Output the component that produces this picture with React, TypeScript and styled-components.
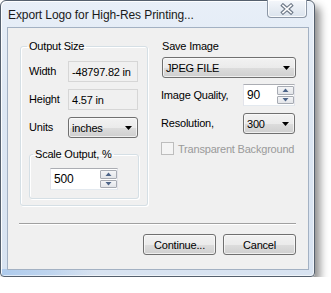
import React from "react";
import styled, { createGlobalStyle } from "styled-components";

const Global = createGlobalStyle`
  html, body { margin: 0; padding: 0; background: #ffffff; }
  body { font-family: "Liberation Sans", Arial, sans-serif; }
  * { box-sizing: border-box; }
`;

const Window = styled.div`
  width: 315px;
  height: 277px;
  border: 1px solid #55606e;
  border-radius: 6px 6px 4px 4px;
  background:
    linear-gradient(to right, rgba(160, 195, 235, 0.75) 0, rgba(160, 195, 235, 0.45) 16%, rgba(160, 195, 235, 0) 30%) left bottom / 100% 7px no-repeat,
    linear-gradient(180deg, #e8eff8 0%, #dde7f3 40%, #d8e3f1 100%);
  box-shadow: inset 1px 1px 0 rgba(255, 255, 255, 0.9), inset -1px -1px 0 rgba(255, 255, 255, 0.6),
    5px 6px 9px rgba(0, 0, 0, 0.45);
  display: flex;
  flex-direction: column;
  padding: 0 5px 6px 6px;
`;

const TitleBar = styled.div`
  height: 26px;
  display: flex;
  align-items: flex-start;
  justify-content: space-between;
`;

const Title = styled.div`
  font-family: "Liberation Sans", Arial, sans-serif;
  font-size: 12px;
  line-height: 15px;
  color: #1a1a1a;
  margin-top: 7px;
  padding-left: 1px;
  letter-spacing: -0.1px;
`;

const CloseButton = styled.div`
  width: 40px;
  height: 18px;
  margin-top: -1px;
  margin-right: 2px;
  border: 1px solid #8c97a6;
  border-top: none;
  border-radius: 0 0 4px 4px;
  background: linear-gradient(180deg, #f4f7fb 0%, #e6ecf3 55%, #dbe3ed 100%);
  box-shadow: inset 0 0 0 1px rgba(255, 255, 255, 0.8);
  display: flex;
  align-items: center;
  justify-content: center;
`;

const Client = styled.div`
  flex: 1;
  background: #f0f0f0;
  border: 1px solid #a3b1c3;
  padding: 12px 12px 0 12px;
  display: flex;
  flex-direction: column;
  font-size: 11px;
  letter-spacing: -0.2px;
  color: #000;
`;

const MainRow = styled.div`
  display: flex;
  align-items: flex-start;
  gap: 13px;
`;

const Group = styled.fieldset<{ $w: number; $pl: number; $pb: number }>`
  margin: 0;
  width: ${(p) => p.$w}px;
  min-width: 0;
  border: 1px solid #d5dfe5;
  border-radius: 3px;
  padding: 0 ${(p) => p.$pl}px ${(p) => p.$pb}px ${(p) => p.$pl}px;
  box-shadow: inset 1px 1px 0 #ffffff, 1px 1px 0 #ffffff;
`;

const Legend = styled.legend`
  padding: 0 2px;
  margin-left: -2px;
  font-size: 11px;
  line-height: 13px;
`;

const FormGrid = styled.div`
  margin-top: 8px;
  display: grid;
  grid-template-columns: 39px 70px;
  row-gap: 7px;
  align-items: center;
`;

const Label = styled.span`
  line-height: 13px;
  white-space: nowrap;
`;

const ReadOnlyBox = styled.div`
  height: 21px;
  border: 1px solid #d6d6d6;
  background: #f0f0f0;
  padding: 0 3px;
  display: flex;
  align-items: center;
  white-space: nowrap;
`;

const Combo = styled.div<{ $w: number }>`
  width: ${(p) => p.$w}px;
  height: 21px;
  border: 1px solid #707070;
  border-radius: 3px;
  background: linear-gradient(180deg, #f2f2f2 0%, #ebebeb 50%, #dddddd 51%, #cfcfcf 100%);
  box-shadow: inset 0 0 0 1px rgba(252, 252, 252, 0.7);
  display: flex;
  align-items: center;
  justify-content: space-between;
  padding-left: 3px;
  white-space: nowrap;
`;

const ArrowBox = styled.span`
  width: 17px;
  height: 100%;
  display: flex;
  align-items: center;
  justify-content: center;
`;

const ScaleGroupWrap = styled.div`
  margin-top: 10px;
`;

const CenterRow = styled.div`
  margin-top: 7px;
  display: flex;
  justify-content: center;
`;

const Spin = styled.div<{ $w: number }>`
  width: ${(p) => p.$w}px;
  height: 22px;
  background: #ffffff;
  border: 1px solid #e2e3ea;
  border-top-color: #abadb3;
  border-bottom-color: #e3e9ef;
  display: flex;
  align-items: stretch;
`;

const SpinText = styled.div`
  flex: 1;
  display: flex;
  align-items: center;
  padding-left: 3px;
  font-size: 12px;
`;

const SpinButtons = styled.div`
  width: 17px;
  display: flex;
  flex-direction: column;
  gap: 1px;
  padding: 1px 0;
`;

const SpinBtn = styled.div`
  flex: 1;
  border: 1px solid #a7abb3;
  border-radius: 1px;
  background: linear-gradient(180deg, #f4f5f7 0%, #e3e5e9 100%);
  display: flex;
  align-items: center;
  justify-content: center;
`;

const RightCol = styled.div`
  width: 135px;
  display: flex;
  flex-direction: column;
`;

const RightLabel = styled.div`
  line-height: 13px;
  padding-left: 1px;
`;

const RightRow = styled.div<{ $mt: number }>`
  margin-top: ${(p) => p.$mt}px;
  display: flex;
  align-items: center;
  justify-content: space-between;
  padding-right: 1px;
`;

const ComboWrap = styled.div`
  margin-top: 4px;
  padding-left: 1px;
`;

const CheckRow = styled.div`
  margin-top: 8px;
  display: flex;
  align-items: center;
  gap: 4px;
  color: #9a9a9a;
`;

const CheckBox = styled.span`
  width: 13px;
  height: 13px;
  border: 1px solid #bdbdbd;
  background: #f4f4f4;
`;

const Separator = styled.div`
  margin: 17px 0 0 -1px;
  width: 277px;
  border-top: 1px solid #a0a0a0;
  border-bottom: 1px solid #ffffff;
`;

const ButtonRow = styled.div`
  margin-top: 9px;
  display: flex;
  justify-content: flex-end;
  gap: 7px;
`;

const Button = styled.div`
  width: 73px;
  height: 21px;
  border: 1px solid #707070;
  border-radius: 3px;
  background: linear-gradient(180deg, #f2f2f2 0%, #ebebeb 50%, #dddddd 51%, #cfcfcf 100%);
  box-shadow: inset 0 0 0 1px rgba(252, 252, 252, 0.7);
  display: flex;
  align-items: center;
  justify-content: center;
  font-size: 11px;
`;

const DownArrow = () => (
  <svg width="7" height="4" viewBox="0 0 7 4">
    <path d="M0 0H7L3.5 4Z" fill="#000" />
  </svg>
);

const SpinArrow = ({ up }: { up?: boolean }) => (
  <svg width="7" height="4" viewBox="0 0 7 4">
    <path d={up ? "M0.5 4H6.5L3.5 0.5Z" : "M0.5 0H6.5L3.5 3.5Z"} fill="#4d6488" />
  </svg>
);

const SpinBox = ({ w, value }: { w: number; value: string }) => (
  <Spin $w={w}>
    <SpinText>{value}</SpinText>
    <SpinButtons>
      <SpinBtn>
        <SpinArrow up />
      </SpinBtn>
      <SpinBtn>
        <SpinArrow />
      </SpinBtn>
    </SpinButtons>
  </Spin>
);

const CloseGlyph = () => (
  <svg width="14" height="12" viewBox="0 0 14 12">
    <g strokeLinecap="square">
      <path d="M3 2.5L11 9.5M11 2.5L3 9.5" stroke="#6f7a89" strokeWidth="3.8" />
      <path d="M3 2.5L11 9.5M11 2.5L3 9.5" stroke="#ffffff" strokeWidth="1.6" />
    </g>
  </svg>
);

export default function App() {
  return (
    <>
      <Global />
      <Window>
        <TitleBar>
          <Title>Export Logo for High-Res Printing...</Title>
          <CloseButton>
            <CloseGlyph />
          </CloseButton>
        </TitleBar>
        <Client>
          <MainRow>
            <Group $w={128} $pl={8} $pb={6}>
              <Legend>Output Size</Legend>
              <FormGrid>
                <Label>Width</Label>
                <ReadOnlyBox>-48797.82 in</ReadOnlyBox>
                <Label>Height</Label>
                <ReadOnlyBox>4.57 in</ReadOnlyBox>
                <Label>Units</Label>
                <Combo $w={70}>
                  inches
                  <ArrowBox>
                    <DownArrow />
                  </ArrowBox>
                </Combo>
              </FormGrid>
              <ScaleGroupWrap>
                <Group $w={110} $pl={5} $pb={8}>
                  <Legend>Scale Output, %</Legend>
                  <CenterRow>
                    <SpinBox w={68} value="500" />
                  </CenterRow>
                </Group>
              </ScaleGroupWrap>
            </Group>
            <RightCol>
              <RightLabel>Save Image</RightLabel>
              <ComboWrap>
                <Combo $w={134}>
                  JPEG FILE
                  <ArrowBox>
                    <DownArrow />
                  </ArrowBox>
                </Combo>
              </ComboWrap>
              <RightRow $mt={6}>
                <Label>Image Quality,</Label>
                <SpinBox w={52} value="90" />
              </RightRow>
              <RightRow $mt={7}>
                <Label>Resolution,</Label>
                <Combo $w={52}>
                  300
                  <ArrowBox>
                    <DownArrow />
                  </ArrowBox>
                </Combo>
              </RightRow>
              <CheckRow>
                <CheckBox />
                <span>Transparent Background</span>
              </CheckRow>
            </RightCol>
          </MainRow>
          <Separator />
          <ButtonRow>
            <Button>Continue...</Button>
            <Button>Cancel</Button>
          </ButtonRow>
        </Client>
      </Window>
    </>
  );
}
